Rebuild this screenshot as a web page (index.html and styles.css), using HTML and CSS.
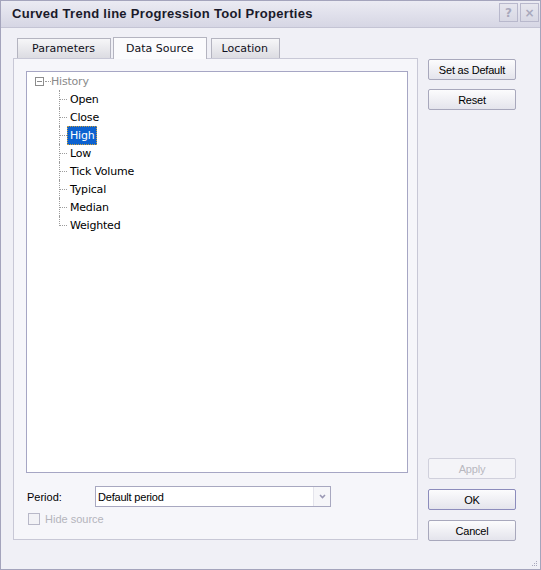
FILE: index.html
```html
<!DOCTYPE html>
<html lang="en">
<head>
    <meta charset="UTF-8">
    <meta name="viewport" content="width=device-width, initial-scale=1.0">
    <title>Curved Trend line Progression Tool Properties</title>
    <link rel="stylesheet" href="styles.css">
</head>
<body>
    <div class="window">
        <div class="titlebar">
            <span class="title">Curved Trend line Progression Tool Properties</span>
            <div class="caption-buttons">
                <span class="caption-btn">?</span>
                <span class="caption-btn">&#215;</span>
            </div>
        </div>

        <div class="content">
            <div class="left">
                <div class="tabs">
                    <div class="tab">Parameters</div>
                    <div class="tab active">Data Source</div>
                    <div class="tab">Location</div>
                </div>
                <div class="panel">
                    <div class="tree">
                        <div class="root">
                            <span class="expander"></span>
                            <span class="root-branch"></span>
                            <span class="root-label">History</span>
                        </div>
                        <ul class="children">
                            <li><span class="branch"></span><span class="label">Open</span></li>
                            <li><span class="branch"></span><span class="label">Close</span></li>
                            <li><span class="branch"></span><span class="label selected">High</span></li>
                            <li><span class="branch"></span><span class="label">Low</span></li>
                            <li><span class="branch"></span><span class="label">Tick Volume</span></li>
                            <li><span class="branch"></span><span class="label">Typical</span></li>
                            <li><span class="branch"></span><span class="label">Median</span></li>
                            <li class="last"><span class="branch"></span><span class="label">Weighted</span></li>
                        </ul>
                    </div>

                    <div class="period-row">
                        <label class="period-label">Period:</label>
                        <div class="combo">
                            <span class="combo-text">Default period</span>
                            <span class="combo-btn">
                                <svg width="7" height="5" viewBox="0 0 7 5"><path d="M1 1 L3.5 3.5 L6 1" fill="none" stroke="#9a98b4" stroke-width="1.6"/></svg>
                            </span>
                        </div>
                    </div>

                    <div class="check-row">
                        <span class="checkbox"></span>
                        <span class="check-text">Hide source</span>
                    </div>
                </div>
            </div>

            <div class="right">
                <button class="btn">Set as Default</button>
                <button class="btn reset">Reset</button>
                <div class="spacer"></div>
                <button class="btn" disabled>Apply</button>
                <button class="btn default">OK</button>
                <button class="btn">Cancel</button>
            </div>
        </div>

        <svg class="grip" width="10" height="10" viewBox="0 0 10 10">
            <rect x="7" y="3" width="1" height="1" fill="#a8a8bc"/>
            <rect x="5" y="5" width="1" height="1" fill="#a8a8bc"/>
            <rect x="7" y="5" width="1" height="1" fill="#a8a8bc"/>
            <rect x="3" y="7" width="1" height="1" fill="#a8a8bc"/>
            <rect x="5" y="7" width="1" height="1" fill="#a8a8bc"/>
            <rect x="7" y="7" width="1" height="1" fill="#a8a8bc"/>
        </svg>
    </div>
</body>
</html>
```

FILE: styles.css
```css
* {
    box-sizing: border-box;
}

body {
    margin: 0;
    font-family: "Liberation Sans", Arial, sans-serif;
    font-size: 11px;
    color: #000;
    background-color: #f0f0f6;
}

.window {
    position: relative;
    width: 541px;
    height: 570px;
    border: 1px solid #a4a4bc;
    background-color: #f0f0f6;
}

.titlebar {
    height: 27px;
    display: flex;
    align-items: center;
    justify-content: space-between;
    padding-left: 11px;
    padding-right: 1px;
    background: linear-gradient(#ebebf3, #d6d6e4);
    border-bottom: 1px solid #c4c4d4;
}

.title {
    font-family: "Liberation Sans", Arial, sans-serif;
    font-weight: bold;
    font-size: 13px;
    letter-spacing: 0.3px;
    color: #1a1a2a;
    margin-top: -1px;
}

.caption-buttons {
    display: flex;
    gap: 2px;
    align-self: flex-start;
    margin-top: 2px;
}

.caption-btn {
    width: 19px;
    height: 19px;
    border: 1px solid #b8b8cc;
    background: linear-gradient(#e6e6ee, #d8d8e4);
    color: #a8a8bc;
    font-family: "DejaVu Sans", sans-serif;
    font-weight: bold;
    font-size: 12px;
    display: flex;
    align-items: center;
    justify-content: center;
}

.content {
    display: flex;
    padding: 9px 0 0 12px;
}

.left {
    width: 405px;
}

/* onglets */
.tabs {
    display: flex;
    align-items: flex-end;
    height: 21px;
    padding-left: 4px;
    gap: 2px;
}

.tab {
    height: 20px;
    padding: 0 11px 0 10px;
    font-family: "DejaVu Sans", sans-serif;
    font-size: 11px;
    line-height: 19px;
    color: #101020;
    border: 1px solid #b4b4c0;
    border-bottom: none;
    background: linear-gradient(#f6f6f8, #dcdce2);
}

.tab.active {
    height: 22px;
    line-height: 21px;
    padding: 0 12px;
    margin-right: 2px;
    background: #fbfbfd;
    position: relative;
    z-index: 1;
    margin-bottom: -1px;
}

.tab:first-child {
    padding: 0 15px 0 14px;
}

.panel {
    height: 482px;
    border: 1px solid #c8c8d6;
    background-color: #f6f6fa;
    padding: 12px 9px 0 12px;
}

/* arbre */
.tree {
    height: 402px;
    border: 1px solid #a6a6c4;
    background-color: #fff;
    font-family: "DejaVu Sans", sans-serif;
    font-size: 11px;
    letter-spacing: -0.2px;
}

.root {
    height: 18px;
    display: flex;
    align-items: center;
    padding-left: 8px;
}

.expander {
    width: 9px;
    height: 9px;
    border: 1px solid #8c8c8c;
    background: linear-gradient(#8c8c8c, #8c8c8c) center / 5px 1px no-repeat;
}

.root-branch {
    width: 6px;
    border-top: 1px dotted #9c9c9c;
    margin: 0 1px;
}

.root-label {
    color: #8a8a8a;
    margin-left: -1px;
}

.children {
    list-style: none;
    margin: 0;
    padding: 0 0 0 32px;
}

.children li {
    height: 18px;
    display: flex;
    align-items: center;
    border-left: 1px dotted #9c9c9c;
}

.children li.last {
    border-left: none;
    padding-left: 1px;
    position: relative;
}

.children li.last::before {
    content: "";
    position: absolute;
    left: 0;
    top: 0;
    height: 10px;
    border-left: 1px dotted #9c9c9c;
}

.branch {
    width: 7px;
    border-top: 1px dotted #9c9c9c;
}

.label {
    padding: 1px 2px;
    line-height: 15px;
    border: 1px solid transparent;
}

.label.selected {
    background-color: #0d62d0;
    color: #fff;
    border: 1px dotted #c8a040;
}

/* periode */
.period-row {
    display: flex;
    align-items: center;
    margin-top: 13px;
}

.period-label {
    width: 69px;
    padding-left: 1px;
}

.combo {
    width: 236px;
    height: 21px;
    border: 1px solid #a8a8c0;
    background-color: #fff;
    display: flex;
    align-items: center;
}

.combo-text {
    flex: 1;
    padding-left: 2px;
    letter-spacing: -0.2px;
}

.combo-btn {
    width: 17px;
    height: 19px;
    border-left: 1px solid #e4e4ec;
    display: flex;
    align-items: center;
    justify-content: center;
    background-color: #f6f6f9;
}

.check-row {
    display: flex;
    align-items: center;
    margin-top: 6px;
    padding-left: 2px;
    color: #b4b4bc;
}

.checkbox {
    width: 12px;
    height: 12px;
    border: 1px solid #b8b8c8;
    background-color: #f2f2f6;
    margin-right: 5px;
}

/* boutons */
.right {
    display: flex;
    flex-direction: column;
    width: 88px;
    margin-left: 10px;
    margin-top: 22px;
    height: 482px;
    gap: 10px;
}

.spacer {
    flex: 1;
}

.btn {
    flex: none;
    height: 21px;
    font-family: "Liberation Sans", Arial, sans-serif;
    font-size: 11px;
    letter-spacing: -0.2px;
    color: #000;
    border: 1px solid #a8a8bc;
    border-radius: 2px;
    background: linear-gradient(#fcfcfd, #e4e4ec);
    padding: 0;
    cursor: pointer;
}

.btn.reset {
    margin-top: -1px;
}

.btn:disabled {
    color: #b8b8c0;
    border-color: #d0d0dc;
    background: #f4f4f8;
}

.btn.default {
    border-color: #8c8cbc;
}

.grip {
    position: absolute;
    right: 1px;
    bottom: 1px;
}
```
